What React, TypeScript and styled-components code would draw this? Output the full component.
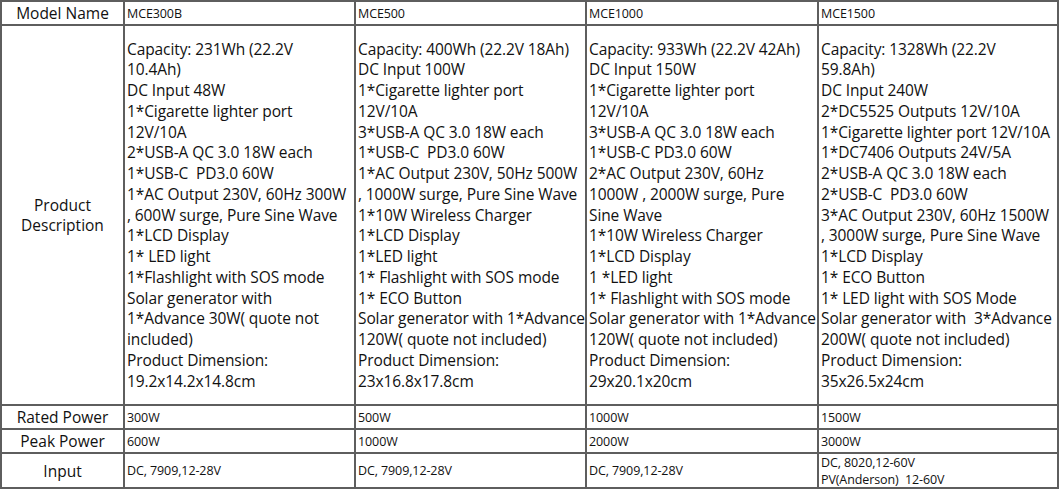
import React from "react";
import styled, { createGlobalStyle } from "styled-components";

const Global = createGlobalStyle`
  html, body { margin: 0; padding: 0; background: #ffffff; }
  body { font-family: "Open Sans", "Noto Sans", sans-serif; color: #111111; }
`;

const Table = styled.div`
  display: grid;
  grid-template-columns: 121px 229px 229px 230px 238px;
  grid-template-rows: 22px 378px 22px 22px 33px;
  gap: 2px;
  padding: 2px;
  width: 1059px;
  background: #5e5e5e;
  box-sizing: border-box;
`;

const Cell = styled.div<{ $label?: boolean; $small?: boolean }>`
  background: #ffffff;
  display: flex;
  flex-direction: column;
  justify-content: center;
  align-items: ${(p) => (p.$label ? "center" : "flex-start")};
  text-align: ${(p) => (p.$label ? "center" : "left")};
  padding: ${(p) => (p.$label ? "0" : "0 0 0 2px")};
  font-size: ${(p) => (p.$label ? "15.5px" : p.$small ? "12.5px" : "15.5px")};
  line-height: ${(p) => (p.$label ? "20px" : p.$small ? "17px" : "20.75px")};
  letter-spacing: ${(p) => (p.$label ? "0" : p.$small ? "-0.1px" : "-0.1px")};
  color: #111111;
  white-space: pre;
  overflow: hidden;
`;

const Line = styled.div``;

const models = ["MCE300B", "MCE500", "MCE1000", "MCE1500"];

const descriptions: string[][] = [
  [
    "Capacity: 231Wh (22.2V",
    "10.4Ah)",
    "DC Input 48W",
    "1*Cigarette lighter port",
    "12V/10A",
    "2*USB-A QC 3.0 18W each",
    "1*USB-C  PD3.0 60W",
    "1*AC Output 230V, 60Hz 300W",
    ", 600W surge, Pure Sine Wave",
    "1*LCD Display",
    "1* LED light",
    "1*Flashlight with SOS mode",
    "Solar generator with",
    "1*Advance 30W( quote not",
    "included)",
    "Product Dimension:",
    "19.2x14.2x14.8cm",
  ],
  [
    "Capacity: 400Wh (22.2V 18Ah)",
    "DC Input 100W",
    "1*Cigarette lighter port",
    "12V/10A",
    "3*USB-A QC 3.0 18W each",
    "1*USB-C  PD3.0 60W",
    "1*AC Output 230V, 50Hz 500W",
    ", 1000W surge, Pure Sine Wave",
    "1*10W Wireless Charger",
    "1*LCD Display",
    "1*LED light",
    "1* Flashlight with SOS mode",
    "1* ECO Button",
    "Solar generator with 1*Advance",
    "120W( quote not included)",
    "Product Dimension:",
    "23x16.8x17.8cm",
  ],
  [
    "Capacity: 933Wh (22.2V 42Ah)",
    "DC Input 150W",
    "1*Cigarette lighter port",
    "12V/10A",
    "3*USB-A QC 3.0 18W each",
    "1*USB-C PD3.0 60W",
    "2*AC Output 230V, 60Hz",
    "1000W , 2000W surge, Pure",
    "Sine Wave",
    "1*10W Wireless Charger",
    "1*LCD Display",
    "1 *LED light",
    "1* Flashlight with SOS mode",
    "Solar generator with 1*Advance",
    "120W( quote not included)",
    "Product Dimension:",
    "29x20.1x20cm",
  ],
  [
    "Capacity: 1328Wh (22.2V",
    "59.8Ah)",
    "DC Input 240W",
    "2*DC5525 Outputs 12V/10A",
    "1*Cigarette lighter port 12V/10A",
    "1*DC7406 Outputs 24V/5A",
    "2*USB-A QC 3.0 18W each",
    "2*USB-C  PD3.0 60W",
    "3*AC Output 230V, 60Hz 1500W",
    ", 3000W surge, Pure Sine Wave",
    "1*LCD Display",
    "1* ECO Button",
    "1* LED light with SOS Mode",
    "Solar generator with  3*Advance",
    "200W( quote not included)",
    "Product Dimension:",
    "35x26.5x24cm",
  ],
];

const rated = ["300W", "500W", "1000W", "1500W"];
const peak = ["600W", "1000W", "2000W", "3000W"];
const inputs: string[][] = [
  ["DC, 7909,12-28V"],
  ["DC, 7909,12-28V"],
  ["DC, 7909,12-28V"],
  ["DC, 8020,12-60V", "PV(Anderson)  12-60V"],
];

export default function App() {
  return (
    <>
      <Global />
      <Table>
        <Cell $label>Model Name</Cell>
        {models.map((m) => (
          <Cell key={m} $small>
            {m}
          </Cell>
        ))}

        <Cell $label>
          <Line>Product</Line>
          <Line>Description</Line>
        </Cell>
        {descriptions.map((lines, i) => (
          <Cell key={i}>
            {lines.map((l, j) => (
              <Line key={j}>{l}</Line>
            ))}
          </Cell>
        ))}

        <Cell $label>Rated Power</Cell>
        {rated.map((v, i) => (
          <Cell key={i} $small>
            {v}
          </Cell>
        ))}

        <Cell $label>Peak Power</Cell>
        {peak.map((v, i) => (
          <Cell key={i} $small>
            {v}
          </Cell>
        ))}

        <Cell $label>Input</Cell>
        {inputs.map((lines, i) => (
          <Cell key={i} $small>
            {lines.map((l, j) => (
              <Line key={j}>{l}</Line>
            ))}
          </Cell>
        ))}
      </Table>
    </>
  );
}
